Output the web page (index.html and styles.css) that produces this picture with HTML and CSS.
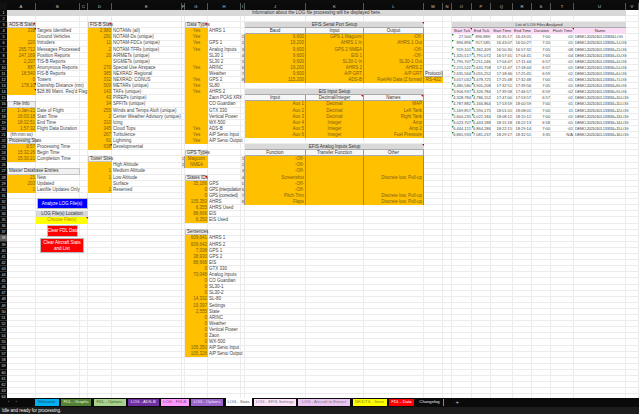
FILE: index.html
```html
<!DOCTYPE html>
<html>
<head>
<title>LOG - Stats</title>
<link rel="stylesheet" href="styles.css">
</head>
<body>
<div class="ribbon-edge"></div>

<div class="sheet">
    <div class="corner"></div>
    <div class="colhead">
        <span>A</span><span>B</span><span>C</span><span>D</span><span>E</span><span>F</span><span>G</span><span>H</span><span>I</span><span>J</span><span>K</span><span>L</span><span>M</span><span>N</span><span>O</span><span>P</span><span>Q</span><span>R</span><span>S</span><span>T</span><span>U</span><span>V</span>
    </div>
    <div class="rowhead">
        <span>1</span><span>2</span><span>3</span><span>4</span><span>5</span><span>6</span><span>7</span><span>8</span><span>9</span><span>10</span>
        <span>11</span><span>12</span><span>13</span><span>14</span><span>15</span><span>16</span><span>17</span><span>18</span><span>19</span><span>20</span>
        <span>21</span><span>22</span><span>23</span><span>24</span><span>25</span><span>26</span><span>27</span><span>28</span><span>29</span><span>30</span>
        <span>31</span><span>32</span><span>33</span><span>34</span><span>35</span><span>36</span><span>37</span><span class="row-active">38</span><span>39</span><span>40</span>
        <span>41</span><span>42</span><span>43</span><span>44</span><span>45</span><span>46</span><span>47</span><span>48</span><span>49</span><span>50</span>
        <span>51</span><span>52</span><span>53</span><span>54</span><span>55</span><span>56</span><span>57</span><span>58</span><span>59</span><span>60</span>
        <span>61</span><span>62</span><span>63</span><span>64</span>
    </div>

    <div class="gridlines">
        <i></i><i></i><i></i><i></i><i></i><i></i><i></i><i></i><i></i><i></i><i></i><i></i><i></i><i></i><i></i><i></i><i></i><i></i><i></i><i></i><i></i><i></i>
    </div>

    <div class="banner">Information about the LOG file processing will be displayed here.</div>

    <!-- Left column -->
    <div class="block aos">
        <span class="head note">AOS-B Stats</span><span></span>
        <span class="o r note">338</span><span>Targets Identified</span>
        <span class="o r"></span><span>Ground Vehicles</span>
        <span class="o r">220</span><span>Intruders</span>
        <span class="o r">265,712</span><span>Messages Processed</span>
        <span class="o r">247,169</span><span>Position Reports</span>
        <span class="o r">2,207</span><span>TIS-B Reports</span>
        <span class="o r">887</span><span>Anonymous Reports</span>
        <span class="o r">18,540</span><span>FIS-B Reports</span>
        <span class="o r">0</span><span>Towers</span>
        <span class="o r note">178.10</span><span>Ownship Distance (nm)</span>
        <span class="o r note"></span><span>$28.86 Maint. Req'd Flag</span>
    </div>

    <div class="block fileinfo">
        <span class="head">File Info</span><span></span>
        <span class="o r">1-Jan-21</span><span>Date of Flight</span>
        <span class="o r">16:03:18</span><span>Start Time</span>
        <span class="o r">18:32:51</span><span>End Time</span>
        <span class="o r">1:57:32</span><span>Flight Data Duration</span>
        <span class="c">(hh:mm:ss)</span><span></span>
    </div>

    <div class="block proc">
        <span class="head tight">Processing Stats</span><span></span>
        <span class="o r">0:57</span><span>Processing Time</span>
        <span class="o r">15:32:26</span><span>Begin Time</span>
        <span class="o r">15:30:21</span><span>Completion Time</span>
    </div>

    <div class="block master">
        <span class="head span2 left">Master Database Entries</span>
        <span class="o r">21</span><span>New</span>
        <span class="o r">203</span><span>Updated</span>
        <span class="o r">1</span><span>Lastfile Updates Only</span>
    </div>

    <div class="actions">
        <button class="btn btn-blue">Analyze LOG File(s)</button>
        <div class="location">LOG File(s) Location</div>
        <div class="choose note">Choose File(s)</div>
        <button class="btn btn-red btn-clear">Clear FDL Data</button>
        <button class="btn btn-red btn-stats">Clear Aircraft Stats<br>and List</button>
    </div>

    <!-- FIS-B column -->
    <div class="block fisb">
        <span class="head note">FIS-B Stats</span><span></span>
        <span class="o r">2,980</span><span>NOTAMs (all)</span>
        <span class="o r">291</span><span>NOTAM-Ds (unique)</span>
        <span class="o r">11</span><span>NOTAM-FDCs (unique)</span>
        <span class="o r">2</span><span>NOTAM-TFRs (unique)</span>
        <span class="o r">20</span><span>AIRMETs (unique)</span>
        <span class="o r"></span><span>SIGMETs (unique)</span>
        <span class="o r">270</span><span>Special Use Airspace</span>
        <span class="o r">385</span><span>NEXRAD: Regional</span>
        <span class="o r">332</span><span>NEXRAD: CONUS</span>
        <span class="o r">500</span><span>METARs (unique)</span>
        <span class="o r">143</span><span>TAFs (unique)</span>
        <span class="o r">43</span><span>PIREPs (unique)</span>
        <span class="o r">34</span><span>SPFITs (unique)</span>
        <span class="o r">255</span><span>Winds and Temps Aloft (unique)</span>
        <span class="o r">2</span><span>Center Weather Advisory (unique)</span>
        <span class="o r">310</span><span>Icing</span>
        <span class="o r">345</span><span>Cloud Tops</span>
        <span class="o r">267</span><span>Turbulence</span>
        <span class="o r">61</span><span>Lightning</span>
        <span class="o r note">638</span><span>Developmental</span>
    </div>

    <div class="block tower">
        <span class="head">Tower Sites</span><span></span>
        <span class="o r"></span><span>High Altitude</span>
        <span class="o r">1</span><span>Medium Altitude</span>
        <span class="o r">1</span><span>Low Altitude</span>
        <span class="o r"></span><span>Surface</span>
        <span class="o r">1</span><span>Reserved</span>
    </div>

    <!-- Data types column -->
    <div class="block datatypes">
        <span class="head note">Data Types</span><span></span>
        <span class="o c">Yes</span><span>AHRS 1</span>
        <span class="o c">Yes</span><span></span>
        <span class="o c">Yes</span><span>GPS 1</span>
        <span class="o c">Yes</span><span>Analog Inputs</span>
        <span class="o c"></span><span>SL30 1</span>
        <span class="o c"></span><span>SL30 2</span>
        <span class="o c">Yes</span><span>ARINC</span>
        <span class="o c"></span><span>Weather</span>
        <span class="o c">Yes</span><span>GPS 2</span>
        <span class="o c">Yes</span><span>SL80</span>
        <span class="o c">Yes</span><span>AHRS 2</span>
        <span class="o c"></span><span class="tight">Zaon PCAS XRX</span>
        <span class="o c"></span><span>CO Guardian</span>
        <span class="o c"></span><span>GTX 330</span>
        <span class="o c"></span><span>Vertical Power</span>
        <span class="o c"></span><span>WX-500</span>
        <span class="o c">Yes</span><span>ADS-B</span>
        <span class="o c">Yes</span><span class="tight">A/P Servo Input</span>
        <span class="o c">Yes</span><span class="tight">A/P Servo Output</span>
    </div>

    <div class="block gpstypes">
        <span></span><span class="head">GPS Types</span><span></span>
        <span class="idx">1</span><span class="o c">Magcom</span><span></span>
        <span class="idx">2</span><span class="o c">NMEA</span><span></span>
    </div>

    <div class="block states">
        <span class="head note">States IDs</span><span></span>
        <span class="o r">35,186</span><span>GPS</span>
        <span class="o r">0</span><span class="tighter">GPS (interpolation)</span>
        <span class="o r">0</span><span class="tighter">GPS (corrected)</span>
        <span class="o r">105,350</span><span>AHRS</span>
        <span class="o r">6,355</span><span>AHRS Used</span>
        <span class="o r">88,666</span><span>EIS</span>
        <span class="o r">6,350</span><span>EIS Used</span>
    </div>

    <div class="block sentences">
        <span class="head">Sentences</span><span></span>
        <span class="o r">609,641</span><span>AHRS 1</span>
        <span class="o r">609,642</span><span>AHRS 2</span>
        <span class="o r">7,008</span><span>GPS 1</span>
        <span class="o r">38,930</span><span>GPS 2</span>
        <span class="o r">88,668</span><span>EIS</span>
        <span class="o r">0</span><span>GTX 330</span>
        <span class="o r">70,048</span><span>Analog Inputs</span>
        <span class="o r">0</span><span>CO Guardian</span>
        <span class="o r">0</span><span>SL30-1</span>
        <span class="o r">0</span><span>SL30-2</span>
        <span class="o r">14,332</span><span>SL-80</span>
        <span class="o r">19,397</span><span>Settings</span>
        <span class="o r">2,555</span><span>State</span>
        <span class="o r">0</span><span>ARINC</span>
        <span class="o r">0</span><span>Weather</span>
        <span class="o r">0</span><span>Vertical Power</span>
        <span class="o r">0</span><span>Zaon</span>
        <span class="o r">0</span><span>WX-500</span>
        <span class="o r">105,350</span><span class="tight">A/P Servo Input</span>
        <span class="o r">105,326</span><span class="tight">A/P Servo Output</span>
    </div>

    <!-- EFIS setup tables -->
    <div class="block serial">
        <span></span><span class="title span3 note">EFIS Serial Port Setup</span>
        <span></span><span class="subhead">Baud</span><span class="subhead">Input</span><span class="subhead">Output</span>
        <span class="idx">1</span><span class="o r">9,600</span><span class="o r">GPS 1 Magcom</span><span class="o r">-Off-</span>
        <span class="idx">2</span><span class="o r">19,200</span><span class="o r">AHRS 1 In</span><span class="o r">AHRS 1 Out</span>
        <span class="idx">3</span><span class="o r">9,600</span><span class="o r">GPS 2 NMEA</span><span class="o r">-Off-</span>
        <span class="idx">4</span><span class="o r">9,600</span><span class="o r">EIS 1</span><span class="o r">-Off-</span>
        <span class="idx">5</span><span class="o r">9,600</span><span class="o r">SL30-1 In</span><span class="o r">SL30-1 Out</span>
        <span class="idx">6</span><span class="o r">19,200</span><span class="o r">AHRS 2</span><span class="o r">AHRS 2</span>
        <span class="idx">7</span><span class="o r">9,600</span><span class="o r">A/P GRT</span><span class="o r">A/P GRT</span>
        <span class="idx">8</span><span class="o r">115,200</span><span class="o r">ADS-B</span><span class="o r tight">Fuel/Air Data (Z format)</span>
    </div>

    <div class="block protocol">
        <span class="subhead">Protocol</span>
        <span class="o c">RS-422</span>
    </div>

    <div class="block eis">
        <span></span><span class="title span3">EIS Input Setup</span>
        <span></span><span class="subhead">Input</span><span class="subhead note">Decimal/Integer</span><span class="subhead note">Names</span>
        <span></span><span class="o r">Aux 1</span><span class="o c">Decimal</span><span class="o r">MAP</span>
        <span></span><span class="o r">Aux 2</span><span class="o c">Decimal</span><span class="o r">Left Tank</span>
        <span></span><span class="o r">Aux 3</span><span class="o c">Decimal</span><span class="o r">Right Tank</span>
        <span></span><span class="o r">Aux 4</span><span class="o c">Integer</span><span class="o r">Amp</span>
        <span></span><span class="o r">Aux 5</span><span class="o c">Integer</span><span class="o r">Amp 2</span>
        <span></span><span class="o r">Aux 6</span><span class="o c">Integer</span><span class="o r">Fuel Pressure</span>
    </div>

    <div class="block analog">
        <span></span><span class="title span3 note">EFIS Analog Inputs Setup</span>
        <span></span><span class="subhead">Function</span><span class="subhead">Transfer Function</span><span class="subhead">Other</span>
        <span class="idx">1</span><span class="o r">-Off-</span><span class="o"></span><span class="o r"></span>
        <span class="idx">2</span><span class="o r">-Off-</span><span class="o"></span><span class="o r"></span>
        <span class="idx">3</span><span class="o r">-Off-</span><span class="o"></span><span class="o r"></span>
        <span class="idx">4</span><span class="o r">Screenshot</span><span class="o"></span><span class="o r">Discrete low, Pull-up</span>
        <span class="idx">5</span><span class="o r">-Off-</span><span class="o"></span><span class="o r"></span>
        <span class="idx">6</span><span class="o r">-Off-</span><span class="o"></span><span class="o r"></span>
        <span class="idx">7</span><span class="o r">Pitch Trim</span><span class="o"></span><span class="o r">Discrete low, Pull-up</span>
        <span class="idx">8</span><span class="o r">Flaps</span><span class="o"></span><span class="o r">Discrete low, Pull-up</span>
    </div>

    <!-- Log file list -->
    <div class="block loglist">
        <span class="title span7">List of LOG Files Analyzed</span>
        <span class="pink note">Start Tick</span><span class="pink">End Tick</span><span class="pink">Start Time</span><span class="pink">End Time</span><span class="pink">Duration</span><span class="pink note">Flush Time</span><span class="pink">Name</span>
        <span class="r flag">27,500</span><span class="r flag">896,889</span><span class="r">16:35:17</span><span class="r">16:43:05</span><span class="r">7:00</span><span class="r">:01</span><span class="fname">DEMO-20210101-133316.LOG</span>
        <span class="r flag">896,896</span><span class="r flag">917,585</span><span class="r">16:43:07</span><span class="r">16:50:27</span><span class="r">7:20</span><span class="r">:01</span><span class="fname">DEMO-20210101-133316+1.LOG</span>
        <span class="r flag">919,101</span><span class="r flag">1,362,409</span><span class="r">16:50:30</span><span class="r">16:57:32</span><span class="r">7:05</span><span class="r">:08</span><span class="fname">DEMO-20210101-133316+2.LOG</span>
        <span class="r flag">1,320,517</span><span class="r flag">1,791,072</span><span class="r">16:57:41</span><span class="r">17:04:41</span><span class="r">7:00</span><span class="r">:04</span><span class="fname">DEMO-20210101-133316+3.LOG</span>
        <span class="r flag">1,795,707</span><span class="r flag">2,211,246</span><span class="r">17:04:47</span><span class="r">17:11:44</span><span class="r">6:57</span><span class="r">:01</span><span class="fname">DEMO-20210101-133316+4.LOG</span>
        <span class="r flag">2,215,522</span><span class="r flag">2,631,758</span><span class="r">17:11:47</span><span class="r">17:18:44</span><span class="r">6:57</span><span class="r">:01</span><span class="fname">DEMO-20210101-133316+5.LOG</span>
        <span class="r flag">2,635,564</span><span class="r flag">3,055,252</span><span class="r">17:18:46</span><span class="r">17:25:45</span><span class="r">6:59</span><span class="r">:01</span><span class="fname">DEMO-20210101-133316+6.LOG</span>
        <span class="r flag">3,057,032</span><span class="r flag">3,478,725</span><span class="r">17:25:48</span><span class="r">17:32:48</span><span class="r">7:00</span><span class="r">:01</span><span class="fname">DEMO-20210101-133316+7.LOG</span>
        <span class="r flag">3,480,580</span><span class="r flag">3,905,208</span><span class="r">17:32:51</span><span class="r">17:39:56</span><span class="r">7:05</span><span class="r">:01</span><span class="fname">DEMO-20210101-133316+8.LOG</span>
        <span class="r flag">3,906,937</span><span class="r flag">4,326,784</span><span class="r">17:39:58</span><span class="r">17:46:57</span><span class="r">6:59</span><span class="r">:02</span><span class="fname">DEMO-20210101-133316+9.LOG</span>
        <span class="r flag">4,328,784</span><span class="r flag">4,786,152</span><span class="r">17:47:00</span><span class="r">17:53:57</span><span class="r">6:57</span><span class="r">:01</span><span class="fname">DEMO-20210101-133316+10.LOG</span>
        <span class="r flag">4,787,882</span><span class="r flag">5,166,864</span><span class="r">17:53:59</span><span class="r">18:00:59</span><span class="r">7:00</span><span class="r">:01</span><span class="fname">DEMO-20210101-133316+11.LOG</span>
        <span class="r flag">5,169,857</span><span class="r flag">5,590,175</span><span class="r">18:01:01</span><span class="r">18:08:01</span><span class="r">7:00</span><span class="r">:11</span><span class="fname">DEMO-20210101-133316+12.LOG</span>
        <span class="r flag">5,600,235</span><span class="r flag">6,022,184</span><span class="r">18:08:12</span><span class="r">18:15:12</span><span class="r">7:00</span><span class="r">:01</span><span class="fname">DEMO-20210101-133316+13.LOG</span>
        <span class="r flag">6,023,707</span><span class="r flag">6,443,188</span><span class="r">18:15:18</span><span class="r">18:22:13</span><span class="r">6:58</span><span class="r">:01</span><span class="fname">DEMO-20210101-133316+14.LOG</span>
        <span class="r flag">6,444,121</span><span class="r flag">6,864,286</span><span class="r">18:22:15</span><span class="r">18:29:14</span><span class="r">7:00</span><span class="r">:01</span><span class="fname">DEMO-20210101-133316+15.LOG</span>
        <span class="r flag">6,865,933</span><span class="r flag">7,081,237</span><span class="r">18:29:17</span><span class="r">18:32:51</span><span class="r">3:35</span><span class="r">N/A</span><span class="fname">DEMO-20210101-133316+16.LOG</span>
    </div>
</div>

<div class="tabbar">
    <div class="tabnav"><span>&lsaquo;</span><span>&rsaquo;</span></div>
    <div class="tab t-welcome">Welcome</div>
    <div class="tab t-graphs">FDL - Graphs</div>
    <div class="tab t-options">FDL - Options</div>
    <div class="tab t-adsb">LOG - ADS-B</div>
    <div class="tab t-fisb">LOG - FIS-B</div>
    <div class="tab t-logopts">LOG - Options</div>
    <div class="tab t-stats">LOG - Stats</div>
    <div class="tab t-efis">LOG - EFIS Settings</div>
    <div class="tab t-extract">LOG - Aircraft to Extract</div>
    <div class="tab t-seen">NK/DTS - Seen</div>
    <div class="tab t-data">FDL - Data</div>
    <div class="tab t-change">Changelog</div>
    <div class="tab-add">+</div>
</div>

<div class="statusbar">Idle and ready for processing.</div>
</body>
</html>
```

FILE: styles.css
```css
* {
    box-sizing: border-box;
}
html, body {
    margin: 0;
    height: 100%;
}
body {
    display: flex;
    flex-direction: column;
    width: 639px;
    height: 414px;
    overflow: hidden;
    background-color: #000;
    font-family: "Liberation Sans", Arial, sans-serif;
    font-size: 4.5px;
    line-height: 6.1px;
    color: #444;
}
.ribbon-edge {
    height: 3px;
    flex: none;
    background-color: #0c0c0c;
}

/* Sheet: one header column + columns A to V, one header row + rows 1 to 64 */
.sheet {
    flex: none;
    height: 394.7px;
    overflow: hidden;
    display: grid;
    grid-template-columns: 7px 29px 44px 8px 24px 70px 3px 23px 33px 4px 61px 58px 60px 19px 9px 20px 19px 22px 19px 19px 23px 52px 13px;
    grid-template-rows: 7px repeat(64, 6.1px);
    background-color: #fff;
}
.corner {
    grid-area: 1 / 1;
    background-color: #111;
}
.colhead {
    grid-column: 2 / -1;
    grid-row: 1;
    display: grid;
    grid-template-columns: subgrid;
    background-color: #0a0a0a;
    color: #c8c8c8;
    text-align: center;
    line-height: 7px;
    font-size: 4.2px;
}
.colhead span {
    border-right: 1px solid #555;
}
.rowhead {
    grid-column: 1;
    grid-row: 2 / -1;
    display: grid;
    grid-template-rows: subgrid;
    background-color: #0a0a0a;
    color: #ddd;
    text-align: center;
    font-size: 3.8px;
}
.rowhead span {
    border-bottom: 1px solid #333;
}
.rowhead .row-active {
    background-color: #5a5a5a;
}
.gridlines {
    grid-column: 2 / -1;
    grid-row: 2 / -1;
    display: grid;
    grid-template-columns: subgrid;
    background-image: repeating-linear-gradient(to bottom, transparent 0, transparent 5.1px, #ececec 5.1px, #ececec 6.1px);
}
.gridlines i {
    border-right: 1px solid #ececec;
}
.banner {
    grid-column: 2 / 23;
    grid-row: 2;
    background-color: #d9d9d9;
    text-align: center;
    color: #333;
}

/* Blocks of cells lie on the sheet's own tracks */
.block {
    display: grid;
    grid-template-columns: subgrid;
    grid-template-rows: subgrid;
    white-space: nowrap;
}
.block > span {
    min-width: 0;
    padding: 0 1px;
    position: relative;
}
.aos { grid-column: 2 / 4; grid-row: 4 / 16; }
.fileinfo { grid-column: 2 / 4; grid-row: 17 / 23; }
.proc { grid-column: 2 / 4; grid-row: 23 / 27; }
.master { grid-column: 2 / 4; grid-row: 28 / 32; }
.fisb { grid-column: 5 / 7; grid-row: 4 / 25; }
.tower { grid-column: 5 / 7; grid-row: 26 / 32; }
.datatypes { grid-column: 8 / 10; grid-row: 4 / 24; }
.gpstypes { grid-column: 7 / 10; grid-row: 25 / 28; }
.states { grid-column: 8 / 10; grid-row: 29 / 37; }
.sentences { grid-column: 8 / 10; grid-row: 38 / 59; }
.serial { grid-column: 10 / 14; grid-row: 4 / 14; }
.protocol { grid-column: 14 / 15; grid-row: 12 / 14; }
.eis { grid-column: 10 / 14; grid-row: 15 / 23; }
.analog { grid-column: 10 / 14; grid-row: 24 / 34; }
.loglist { grid-column: 16 / 23; grid-row: 4 / 23; font-size: 4px; }

.o {
    background-color: #ffc000;
    color: #7d5f12;
}
.r { text-align: right; }
.c { text-align: center; }
.left { text-align: left; }
.tight { letter-spacing: -0.1px; }
.tighter { letter-spacing: -0.25px; }
.block > .fname {
    letter-spacing: -0.33px;
}
.head {
    background-color: #f0f0f0;
    border: 1px solid #c4c4c4;
    text-align: center;
    line-height: 4.1px;
    color: #333;
}
.head.left { text-align: left; }
.title {
    background-color: #d9d9d9;
    border-bottom: 1px solid #aaa;
    text-align: center;
    color: #333;
}
.subhead {
    background-color: #f7f7f7;
    border-right: 1px solid #999;
    border-bottom: 1px solid #aaa;
    text-align: center;
    line-height: 5.1px;
    color: #333;
}
.pink {
    background-color: #fbdcf7;
    text-align: center;
    color: #333;
}
.span2 { grid-column: span 2; }
.span3 { grid-column: span 3; }
.span7 { grid-column: span 7; }
.block > .idx {
    padding: 0;
    background-color: #ececec;
    border-right: 1px solid #999;
    color: #333;
    text-align: right;
    font-size: 3.4px;
    overflow: hidden;
}
.serial .o,
.analog .o,
.eis .o {
    border-right: 1px solid #b38a10;
}

/* Comment and error corner marks */
.note::after {
    content: "";
    position: absolute;
    top: 0;
    right: 0;
    border-top: 2px solid #d00000;
    border-left: 2px solid transparent;
}
.flag::before {
    content: "";
    position: absolute;
    top: 0;
    left: 0;
    border-top: 2px solid #1e8a3c;
    border-right: 2px solid transparent;
}

/* Buttons lying on the sheet */
.actions {
    grid-column: 3 / 5;
    grid-row: 33 / 43;
    margin-top: -1px;
    display: flex;
    flex-direction: column;
    align-items: center;
    white-space: nowrap;
}
.btn {
    display: block;
    padding: 0;
    border: 1px solid #bbb;
    border-radius: 0;
    font-family: inherit;
    font-size: 4.5px;
    line-height: 6px;
    color: #fff;
}
.btn-blue {
    width: 51px;
    height: 11.5px;
    margin-bottom: 1.5px;
    background-color: #0000ff;
}
.btn-red {
    background-color: #ff0000;
}
.btn-clear {
    width: 31px;
    height: 12px;
    margin-top: 1px;
}
.btn-stats {
    width: 44px;
    height: 15px;
    margin-top: 1.5px;
}
.location {
    width: 100%;
    height: 6px;
    background-color: #d9d9d9;
    text-align: center;
    color: #333;
}
.choose {
    width: 100%;
    height: 7px;
    background-color: #ffff00;
    color: #b8860b;
    text-align: center;
    position: relative;
}

/* Tabs and status */
.tabbar {
    flex: none;
    height: 9px;
    display: flex;
    align-items: flex-start;
    background-color: #0a0a0a;
    white-space: nowrap;
    font-size: 4.2px;
    line-height: 6.5px;
    padding-top: 1.5px;
}
.tabnav {
    width: 35px;
    display: flex;
    gap: 6px;
    padding-left: 8px;
    color: #aaa;
}
.tab {
    flex: none;
    height: 6.5px;
    margin-right: 2.5px;
    text-align: center;
}
.t-welcome { width: 23.5px; background-color: #00b0f0; color: #1d4a66; }
.t-graphs { width: 30px; background-color: #548235; color: #e6f0df; }
.t-options { width: 32px; background-color: #a9d18e; color: #3d5a2b; }
.t-adsb { width: 30.5px; background-color: #7030a0; color: #f2e6fa; }
.t-fisb { width: 27.5px; background-color: #ff99ff; color: #7a3d7a; }
.t-logopts { width: 32px; background-color: #9966cc; color: #f2e6fa; }
.t-stats { width: 26px; margin-top: -1.5px; height: 8px; line-height: 8px; background-color: #fff; color: #3e5a6b; }
.t-efis { width: 41.5px; background-color: #fde4fb; color: #777; }
.t-extract { width: 52px; background-color: #ecc4f2; color: #777; }
.t-seen { width: 34px; background-color: #ffff00; color: #8a8a20; }
.t-data { width: 25px; background-color: #ff0000; color: #fff; }
.t-change { width: 27px; margin-right: 0; color: #eee; border-right: 1px solid #888; }
.tab-add {
    margin-left: 12px;
    color: #ccc;
    font-size: 6px;
}
.statusbar {
    flex: none;
    height: 7.3px;
    padding-left: 2px;
    background-color: #1c1c1c;
    color: #f2f2f2;
    font-size: 4.5px;
    line-height: 7.3px;
}
```
